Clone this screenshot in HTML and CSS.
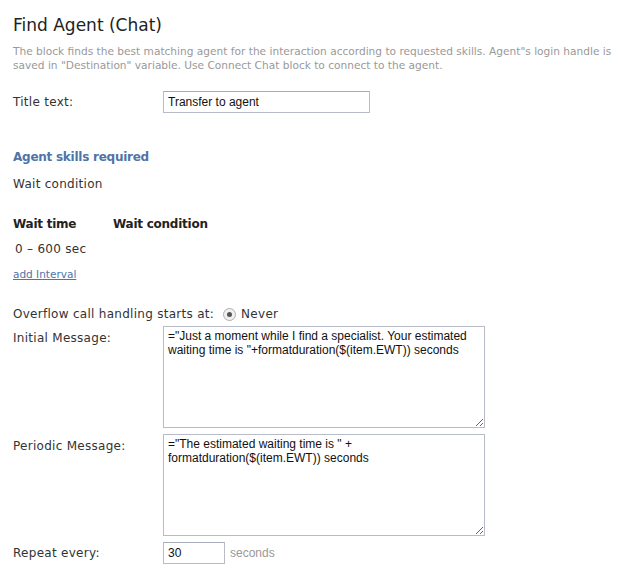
FILE: index.html
```html
<!DOCTYPE html>
<html>
<head>
<meta charset="utf-8">
<link rel="stylesheet" href="styles.css">
</head>
<body>
<div class="page">
  <h1 class="title">Find Agent (Chat)</h1>
  <p class="desc">The block finds the best matching agent for the interaction according to requested skills. Agent"s login handle is saved in "Destination" variable. Use Connect Chat block to connect to the agent.</p>

  <div class="row row-title">
    <label class="label">Title text:</label>
    <input class="text-input wide" type="text" value="Transfer to agent">
  </div>

  <h2 class="section">Agent skills required</h2>
  <div class="plain">Wait condition</div>

  <div class="table-head">
    <span class="th th-time">Wait time</span>
    <span class="th">Wait condition</span>
  </div>
  <div class="interval">0 – 600 sec</div>
  <a class="link" href="#">add Interval</a>

  <div class="overflow">
    <span class="label-inline">Overflow call handling starts at:</span>
    <span class="radio"><span class="radio-dot"></span></span>
    <span class="radio-text">Never</span>
  </div>

  <div class="row row-area first-area">
    <label class="label">Initial Message:</label>
    <textarea class="area">="Just a moment while I find a specialist. Your estimated waiting time is "+formatduration($(item.EWT)) seconds</textarea>
  </div>

  <div class="row row-area">
    <label class="label">Periodic Message:</label>
    <textarea class="area">="The estimated waiting time is " + formatduration($(item.EWT)) seconds</textarea>
  </div>

  <div class="row row-repeat">
    <label class="label">Repeat every:</label>
    <input class="text-input small" type="text" value="30">
    <span class="unit">seconds</span>
  </div>
</div>
</body>
</html>
```

FILE: styles.css
```css
html, body {
  margin: 0;
  padding: 0;
  background: #fff;
}
.page {
  padding: 0 13px;
  font-family: "DejaVu Sans", Verdana, sans-serif;
  color: #333;
  font-size: 12px;
  letter-spacing: 0.28px;
}
.title {
  margin: 0;
  padding-top: 14px;
  font-size: 17px;
  font-weight: normal;
  color: #222;
  line-height: 22px;
  letter-spacing: 0;
}
.desc {
  margin: 8px 0 0;
  font-size: 10.6px;
  line-height: 14px;
  color: #999;
  width: 608px;
  letter-spacing: 0;
}
.row {
  display: flex;
  align-items: flex-start;
}
.label {
  width: 150px;
  flex: none;
  font-size: 12px;
}
.row-title {
  margin-top: 19px;
  align-items: center;
}
.text-input {
  box-sizing: border-box;
  height: 22px;
  border: 1px solid #b8bcc8;
  border-top-color: #a8acb8;
  font-family: "Liberation Sans", Arial, sans-serif;
  font-size: 12px;
  letter-spacing: 0;
  color: #111;
  padding: 0 4px;
  margin: 0;
  background: #fff;
}
.wide { width: 207px; }
.small { width: 62px; }
.section {
  margin: 36px 0 0;
  font-size: 12px;
  font-weight: bold;
  color: #4f74a8;
  line-height: 16px;
  letter-spacing: -0.25px;
}
.plain {
  margin-top: 11px;
  line-height: 16px;
}
.table-head {
  display: flex;
  margin-top: 24px;
  font-weight: bold;
  color: #222;
  line-height: 16px;
  letter-spacing: -0.25px;
}
.th-time { width: 100px; }
.interval {
  margin-top: 9px;
  padding-left: 2px;
  line-height: 16px;
}
.link {
  display: inline-block;
  margin-top: 10px;
  font-size: 10.5px;
  color: #4f74a8;
  line-height: 14px;
  letter-spacing: 0;
}
.overflow {
  display: flex;
  align-items: center;
  margin-top: 25px;
  line-height: 16px;
}
.radio {
  margin-left: 9px;
  width: 11px;
  height: 11px;
  border: 1px solid #b0b0b0;
  border-radius: 50%;
  background: #f0f0f0;
  display: flex;
  align-items: center;
  justify-content: center;
}
.radio-dot {
  width: 5px;
  height: 5px;
  border-radius: 50%;
  background: #555;
}
.radio-text { margin-left: 5px; }
.row-area { margin-top: 6px; }
.first-area { margin-top: 4px; }
.row-area .label { padding-top: 5px; }
.area {
  box-sizing: border-box;
  width: 322px;
  height: 102px;
  margin: 0;
  border: 1px solid #b8bcc8;
  padding: 2px 4px;
  font-family: "Liberation Sans", Arial, sans-serif;
  font-size: 12px;
  letter-spacing: 0;
  line-height: 14px;
  color: #111;
  resize: both;
}
.row-repeat {
  margin-top: 6px;
  align-items: center;
}
.unit {
  margin-left: 5px;
  color: #999;
  font-family: "Liberation Sans", Arial, sans-serif;
  font-size: 12px;
  letter-spacing: 0;
}
```
